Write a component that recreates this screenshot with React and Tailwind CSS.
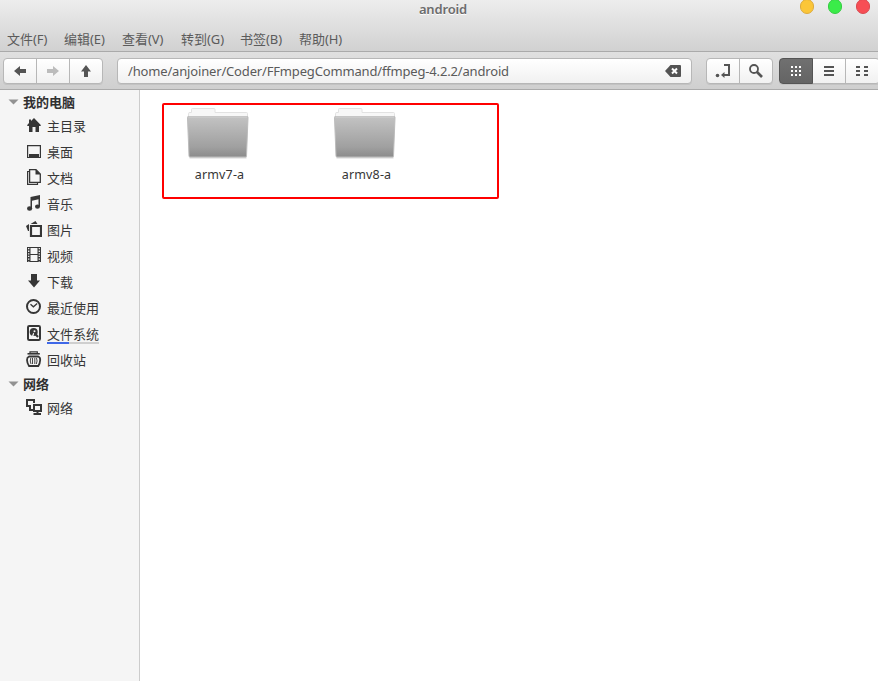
import React from "react";

const ICON = "#363636";

const Svg = ({ w = 16, h = 16, children, className = "" }) => (
  <svg width={w} height={h} viewBox={`0 0 ${w} ${h}`} className={`block shrink-0 ${className}`}>
    {children}
  </svg>
);

const HomeIcon = () => (
  <Svg><path fill={ICON} d="M8 1 L15 8.2 L14.3 9 H13 V15 H9.5 V10 H6.5 V15 H3 V9 H1.700 L1 8.200 L3 6 V2.500 H5 V4 Z" /></Svg>
);
const DesktopIcon = () => (
  <Svg><path fill={ICON} fillRule="evenodd" d="M1 2H15V15H1ZM2.200 3.200V14H3V11H13V14H13.800V3.200Z" /><path fill={ICON} d="M3 11h10v3H3z" /></Svg>
);
const DocumentIcon = () => (
  <Svg>
    <path fill="none" stroke={ICON} strokeWidth="1.2" d="M3 2.500H1.600V15.400H11.500V14" />
    <path fill="none" stroke={ICON} strokeWidth="1.300" d="M3.600 .7H10L14.300 5V13.400H3.600Z" />
    <path fill={ICON} d="M9.500 0.500V5.500H14.500Z" />
  </Svg>
);
const MusicIcon = () => (
  <Svg>
    <path fill={ICON} d="M4.500 2L14 0V11.500H12.500V4.200L6 5.800V13.500H4.500Z" />
    <ellipse cx="3.600" cy="13.500" rx="2.600" ry="2.200" fill={ICON} />
    <ellipse cx="11.500" cy="11.600" rx="2.500" ry="2.200" fill={ICON} />
  </Svg>
);
const PicturesIcon = () => (
  <Svg>
    <path fill="none" stroke={ICON} strokeWidth="2.200" d="M5 5H15V15H5Z" />
    <path fill={ICON} d="M0 5L3 3V10H2ZM4.500 3L9.500 0L11.500 3Z" />
  </Svg>
);
const VideoIcon = () => (
  <Svg>
    <path fill={ICON} fillRule="evenodd" d="M1 0H15V15H1ZM4.500 1V7H11.500V1ZM4.500 8V14H11.500V8Z" />
    <path stroke="#f5f5f5" strokeWidth="1.300" strokeDasharray="1.300 1.300" d="M2.700 1V14.500M13.300 1V14.500" />
  </Svg>
);
const DownloadIcon = () => (
  <Svg><path fill={ICON} d="M5 1H11V7.500H14L8 14.500L2 7.500H5Z" /></Svg>
);
const RecentIcon = () => (
  <Svg>
    <circle cx="7.500" cy="7.500" r="6.500" fill="none" stroke={ICON} strokeWidth="2" />
    <path fill="none" stroke={ICON} strokeWidth="1.300" d="M4.500 5.200L7.400 7.800L11.200 4.600" />
  </Svg>
);
const DiskIcon = () => (
  <Svg>
    <rect x="2" y="1" width="12" height="14" rx="1.300" fill="none" stroke={ICON} strokeWidth="2" />
    <circle cx="7.700" cy="7" r="4" fill={ICON} />
    <circle cx="8.500" cy="6.300" r="1" fill="#f5f5f5" />
    <path stroke="#f5f5f5" strokeWidth="1.300" d="M6.500 11.500L7.800 8" />
    <path stroke={ICON} strokeWidth="2" d="M8.500 8L12 12" />
  </Svg>
);
const TrashIcon = () => (
  <Svg>
    <path fill="none" stroke={ICON} strokeWidth="1.600" d="M1.500 2.800H13.800" />
    <path fill="none" stroke={ICON} strokeWidth="1.200" d="M4 2.500V.8H11.300V2.500" />
    <path fill="none" stroke={ICON} strokeWidth="1.800" d="M3 5.500H12.300Q14.300 6.300 14.200 9Q14 12.500 12.300 15H3Q1.200 12.500 1 9Q1 6.300 3 5.500Z" />
    <path fill="none" stroke={ICON} strokeWidth=".9" d="M4.800 7Q3.600 10 5 13M6.500 7V13M8.800 7V13M10.500 7Q11.700 10 10.300 13" />
  </Svg>
);
const NetworkIcon = () => (
  <Svg w={17}>
    <path fill="none" stroke={ICON} strokeWidth="2" d="M8 4V1H1V7H5M4 7V11H7" />
    <path fill="none" stroke={ICON} strokeWidth="2" d="M8 6H15V12H8ZM11.500 12V15M7.500 15H15" />
  </Svg>
);

const PLACES = [
  ["主目录", HomeIcon],
  ["桌面", DesktopIcon],
  ["文档", DocumentIcon],
  ["音乐", MusicIcon],
  ["图片", PicturesIcon],
  ["视频", VideoIcon],
  ["下载", DownloadIcon],
  ["最近使用", RecentIcon],
  ["文件系统", DiskIcon, true],
  ["回收站", TrashIcon],
];

const Place = ({ label, Icon, usage }) => (
  <div className="flex h-[26px] items-center pl-[26px]">
    <div className="w-[21px] shrink-0 pb-[2px]"><Icon /></div>
    <div className="relative text-[13px] leading-[20px] text-[#363636]">
      {label}
      {usage && (
        <div className="absolute bottom-0 left-0 flex h-[2px] w-full bg-[#cfcfcf]">
          <div className="w-[22px] bg-[#3f68e8]" />
        </div>
      )}
    </div>
  </div>
);

const Section = ({ label, className }) => (
  <div className={`flex items-center pl-[8px] text-[13px] font-bold text-[#303030] ${className}`}>
    <Svg w={15} h={8}><path fill="#929292" d="M0.500 1.500H10.500L5.500 6.500Z" /></Svg>
    <span className="pt-[2px]">{label}</span>
  </div>
);

const MENUS = [
  ["文件", "(F)", "w-[57px]"],
  ["编辑", "(E)", "w-[58px]"],
  ["查看", "(V)", "w-[59px]"],
  ["转到", "(G)", "w-[59px]"],
  ["书签", "(B)", "w-[59px]"],
  ["帮助", "(H)", "w-[59px]"],
];

const group = "flex h-[26px] shrink-0 rounded-[4px] border border-[#b7b7b7] bg-gradient-to-b from-white to-[#f1f1f1] shadow-[0_1px_0_#c3c3c3]";
const cell = "flex items-center justify-center";

const Folder = ({ label }) => (
  <div className="flex w-[147px] flex-col items-start">
    <svg width="62" height="52" viewBox="0 0 62 52" className="block">
      <defs>
        <linearGradient id="folderFace" x1="0" y1="0" x2="0" y2="1">
          <stop offset="0" stopColor="#c3c3c3" />
          <stop offset="0.75" stopColor="#a0a0a0" />
          <stop offset="1" stopColor="#8b8b8b" />
        </linearGradient>
      </defs>
      <path d="M2.500 49.500H59.500" stroke="#d8d8d8" strokeWidth="2" />
      <path d="M1.500 12V5.500Q1.500 4.500 3 4.500H4.500V1.500Q4.500 .5 5.500 .5H27Q28 .5 28 1.500V4.500H59.500Q60.500 4.500 60.500 5.500V12Z" fill="#f7f7f7" stroke="#e2e2e2" />
      <path d="M0.500 9.500Q.5 8.500 1 8.500H60.500Q61 8.500 61 9.500L59.500 48Q59.500 49 58.500 49H3Q2 49 2 48Z" fill="url(#folderFace)" stroke="#bcbcbc" />
      <path d="M1.500 9H60" stroke="#d0d0d0" />
    </svg>
    <div className="w-[65px] pt-[5px] text-center text-[12.500px] leading-[20px] tracking-[0.150px] text-[#363636]">
      {label}
    </div>
  </div>
);

export default function App() {
  return (
    <div className="flex h-[681px] w-[878px] flex-col overflow-hidden bg-white font-['Noto_Sans','Noto_Sans_CJK_SC',sans-serif]">
      <header className="h-[52px] shrink-0 border-b border-[#aaaaaa] bg-gradient-to-b from-[#ededed] via-[#dfdfdf] to-[#d1d1d1]">
        <div className="flex h-[26px] items-start">
          <div className="w-[418px]" />
          <div className="w-[50px] text-center text-[13px] font-semibold leading-[19px] tracking-[-0.150px] text-[#6c6c6c] [text-shadow:0_1px_0_white]">android</div>
          <div className="ml-[332px] flex gap-[14px]">
            <div className="-mt-px h-[15px] w-[14px] rounded-full border border-[#dcaa3c] bg-[#fbc638]" />
            <div className="-mt-px h-[15px] w-[14px] rounded-full border border-[#35cc42] bg-[#3aec49]" />
            <div className="-mt-px h-[15px] w-[14px] rounded-full border border-[#d94950] bg-[#f74e55]" />
          </div>
        </div>
        <nav className="flex h-[26px] items-center pl-[7px] text-[13px] leading-[20px] tracking-[-0.050px] text-[#5b5b5b]">
          {MENUS.map(([name, key, width]) => (
            <div key={name} className={`whitespace-nowrap ${width}`}>{name}{key}</div>
          ))}
        </nav>
      </header>

      <div className="flex h-[38px] shrink-0 items-start border-b border-[#ababab] bg-gradient-to-b from-[#e0e0e0] to-[#cfcfcf] pl-[3px] pt-[6px]">
        <div className={`${group} w-[100px]`}>
          <div className={`${cell} w-[33px] border-r border-[#b7b7b7]`}>
            <Svg w={12} h={10}><path fill="#545454" d="M0 5L6 0V3H12V7H6V10Z" /></Svg>
          </div>
          <div className={`${cell} w-[33px] border-r border-[#b7b7b7]`}>
            <Svg w={12} h={10}><path fill="#bcbcbc" d="M12 5L6 0V3H0V7H6V10Z" /></Svg>
          </div>
          <div className={`${cell} w-[32px]`}>
            <Svg w={10} h={12}><path fill="#545454" d="M5 0L10 6.500H7V12H3V6.500H0Z" /></Svg>
          </div>
        </div>

        <div className={`${group} ml-[14px] w-[575px] items-center justify-between pl-[10px] pr-[10px]`}>
          <span className="whitespace-nowrap text-[13px] leading-[20px] tracking-[-0.165px] text-[#5a5a5a]">/home/anjoiner/Coder/FFmpegCommand/ffmpeg-4.2.2/android</span>
          <Svg w={16} h={12}>
            <path fill="#545454" d="M0 6L5.500 0H15Q16 0 16 1V11Q16 12 15 12H5.500Z" />
            <path stroke="white" strokeWidth="2" d="M7 3.500L12 8.500M12 3.500L7 8.500" />
          </Svg>
        </div>

        <div className={`${group} ml-[14px] w-[67px]`}>
          <div className={`${cell} w-[33px] border-r border-[#b7b7b7]`}>
            <Svg w={16} h={14}>
              <circle cx="2.500" cy="11.500" r="1.800" fill="#545454" />
              <path fill="none" stroke="#545454" strokeWidth="2" d="M9 1H14V11H9" />
              <path fill="#545454" d="M6 11L9.500 8V14Z" />
            </Svg>
          </div>
          <div className={`${cell} w-[32px]`}>
            <Svg w={14} h={14}>
              <circle cx="5" cy="5" r="4" fill="none" stroke="#545454" strokeWidth="1.800" />
              <path stroke="#545454" strokeWidth="2.600" d="M8 8L13 13" />
            </Svg>
          </div>
        </div>

        <div className={`${group} ml-[6px] w-[101px]`}>
          <div className={`${cell} -my-px -ml-px w-[34px] rounded-l-[4px] border border-[#555555] bg-gradient-to-b from-[#707070] to-[#646464]`}>
            <Svg w={10} h={10}>
              <path fill="white" d="M0 0h2v2H0zM4 0h2v2H4zM8 0h2v2H8zM0 4h2v2H0zM4 4h2v2H4zM8 4h2v2H8zM0 8h2v2H0zM4 8h2v2H4zM8 8h2v2H8z" />
            </Svg>
          </div>
          <div className={`${cell} w-[33px] border-r border-[#b7b7b7]`}>
            <Svg w={10} h={10}><path fill="#545454" d="M0 0h10v2H0zM0 4h10v2H0zM0 8h10v2H0z" /></Svg>
          </div>
          <div className={`${cell} w-[32px]`}>
            <Svg w={12} h={10}><path fill="#545454" d="M0 0h4v2H0zM8 0h4v2H8zM0 4h4v2H0zM8 4h4v2H8zM0 8h4v2H0zM8 8h4v2H8z" /></Svg>
          </div>
        </div>
      </div>

      <div className="flex min-h-0 flex-1">
        <aside className="w-[140px] shrink-0 border-r border-[#cccccc] bg-[#f5f5f5]">
          <Section label="我的电脑" className="h-[23px]" />
          {PLACES.map(([label, Icon, usage]) => (
            <Place key={label} label={label} Icon={Icon} usage={usage} />
          ))}
          <Section label="网络" className="h-[22px]" />
          <Place label="网络" Icon={NetworkIcon} />
        </aside>
        <main className="flex-1 pl-[22px] pt-[13px]">
          <div className="flex h-[96px] w-[337px] rounded-[2px] border-2 border-[#ff0000] pl-[23px] pt-[3px]">
            <Folder label="armv7-a" />
            <Folder label="armv8-a" />
          </div>
        </main>
      </div>
    </div>
  );
}
